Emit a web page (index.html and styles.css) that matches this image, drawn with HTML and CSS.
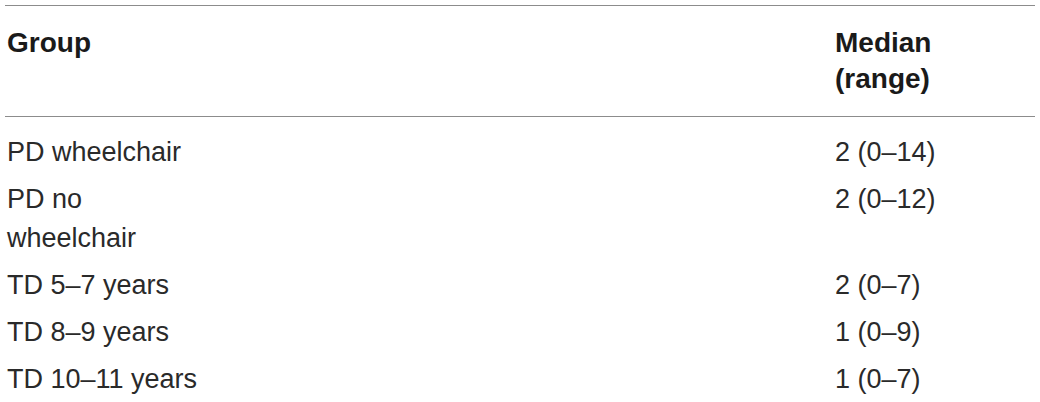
FILE: index.html
```html
<!DOCTYPE html>
<html lang="en">
<head>
  <meta charset="UTF-8" />
  <title>Median by group</title>
  <link rel="stylesheet" href="styles.css">
</head>
<body>

  <!-- Results Table -->
  <table class="results">
    <colgroup>
      <col class="col-group">
      <col class="col-gap">
      <col class="col-median">
    </colgroup>
    <thead>
      <tr>
        <th>Group</th>
        <th></th>
        <th>Median<br>(range)</th>
      </tr>
    </thead>
    <tbody>
      <tr><td>PD wheelchair</td><td></td><td>2 (0–14)</td></tr>
      <tr><td>PD no wheelchair</td><td></td><td>2 (0–12)</td></tr>
      <tr><td>TD 5–7 years</td><td></td><td>2 (0–7)</td></tr>
      <tr><td>TD 8–9 years</td><td></td><td>1 (0–9)</td></tr>
      <tr><td>TD 10–11 years</td><td></td><td>1 (0–7)</td></tr>
    </tbody>
  </table>

</body>
</html>
```

FILE: styles.css
```css
body {
  font-family: 'Liberation Sans', Arial, sans-serif;
  background: white;
  color: #2a2a2a;
  margin: 0;
  padding: 5px;
}

.results {
  width: 1030px;
  border-collapse: collapse;
  table-layout: fixed;
  font-size: 27px;
}

.col-group {
  width: 202px;
}

.col-median {
  width: 202px;
}

.results th {
  text-align: left;
  vertical-align: top;
  font-weight: bold;
  font-size: 28px;
  color: #1a1a1a;
  line-height: 36px;
  padding: 19px 2px 19px 2px;
  border-top: 1px solid #8c8c8c;
  border-bottom: 1px solid #8c8c8c;
}

.results td {
  text-align: left;
  vertical-align: top;
  line-height: 39px;
  padding: 4px 2px;
}

.results tbody tr:first-child td {
  padding-top: 16px;
}
```
